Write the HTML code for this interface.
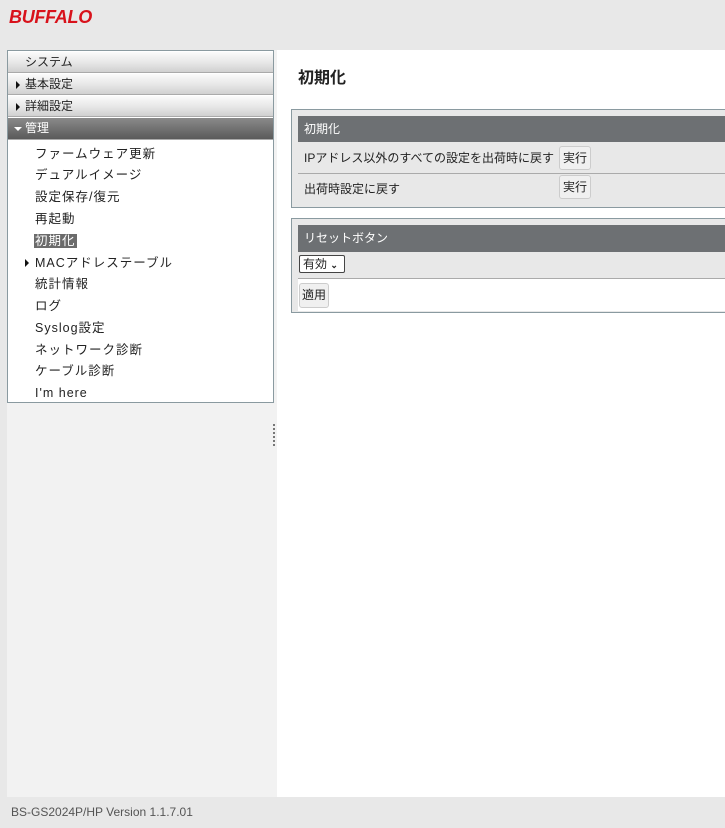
<!DOCTYPE html>
<html><head><meta charset="utf-8"><style>
*{margin:0;padding:0;box-sizing:border-box}
body{width:725px;height:828px;background:#e8e8e8;font-family:"Liberation Sans","Noto Sans CJK JP",sans-serif;font-size:12px;color:#222;position:relative;overflow:hidden}
.abs{position:absolute}
.logo{left:9px;top:7px;font:italic bold 18px "Liberation Sans",sans-serif;color:#d8121b;letter-spacing:-0.3px}
.side{left:7px;top:50px;width:270px;height:747px;background:#f2f2f2}
.nav{left:7px;top:50px;width:267px;height:353px;background:#fff;border:1px solid #8a9aa0}
.cat{position:absolute;left:0;width:265px;height:21px;background:linear-gradient(#fbfbfb,#e6e6e6 55%,#d0d0d0);border-bottom:1px solid #aaa;font-size:12px;line-height:21px;padding-left:17px;color:#222}
.cat.act{background:linear-gradient(#8a8a8a,#5a5a5a);color:#fff}
.tri{position:absolute;left:8px;top:7px;width:0;height:0;border-top:4px solid transparent;border-bottom:4px solid transparent;border-left:4px solid #111}
.tri.dn{left:6px;top:9px;border-left:4px solid transparent;border-right:4px solid transparent;border-top:4px solid #fff;border-bottom:0}
.it{position:absolute;left:27px;font-size:12.5px;letter-spacing:1px;line-height:18px}
.sel{background:#6b6b6b;color:#fff;padding:0 1px;margin-left:-1px}
.main{left:277px;top:50px;width:448px;height:747px;background:#fff}
h1{position:absolute;left:298px;top:64px;font-size:16px;font-weight:bold}
.box{position:absolute;left:291px;width:440px;border:1px solid #8a9aa0;background:#e8e8e8}
.hd{position:absolute;left:6px;right:0;background:#6d7073;color:#fff;font-size:12px;padding-left:6px}
.row{position:absolute;left:6px;right:0;font-size:12px;padding-left:6px;border-bottom:1px solid #aaa}
.btn{position:absolute;background:#f0f0f0;border:1px solid #ccc;border-radius:3px;font-size:12px;text-align:center;color:#222}
.foot{left:0;top:797px;width:725px;height:31px;background:#e8e8e8;color:#555;font-size:12px;line-height:31px;padding-left:11px}
</style></head><body>
<div class="abs logo">BUFFALO</div>
<div class="abs side"></div>
<div class="abs nav">
<div class="cat" style="top:1px;padding-left:17px">システム</div>
<div class="cat" style="top:23px"><span class="tri"></span>基本設定</div>
<div class="cat" style="top:45px"><span class="tri"></span>詳細設定</div>
<div class="cat act" style="top:67px;height:22px"><span class="tri dn"></span>管理</div>
<div class="it" style="top:94px">ファームウェア更新</div>
<div class="it" style="top:115px">デュアルイメージ</div>
<div class="it" style="top:137px">設定保存/復元</div>
<div class="it" style="top:159px">再起動</div>
<div class="it" style="top:181px"><span class="sel">初期化</span></div>
<div class="it" style="top:203px"><span class="tri" style="left:-10px;top:5px"></span>MACアドレステーブル</div>
<div class="it" style="top:224px">統計情報</div>
<div class="it" style="top:246px">ログ</div>
<div class="it" style="top:268px">Syslog設定</div>
<div class="it" style="top:290px">ネットワーク診断</div>
<div class="it" style="top:311px">ケーブル診断</div>
<div class="it" style="top:333px">I'm here</div>
</div>
<div class="abs" style="left:273px;top:424px;width:2px;height:22px;border-left:2px dotted #777"></div>
<div class="abs main"></div>
<h1>初期化</h1>
<div class="box" style="top:109px;height:99px">
<div class="hd" style="top:6px;height:26px;line-height:26px">初期化</div>
<div class="row" style="top:32px;height:32px;line-height:32px">IPアドレス以外のすべての設定を出荷時に戻す</div>
<div class="row" style="top:64px;height:30px;line-height:30px;border-bottom:0">出荷時設定に戻す</div>
<div class="btn" style="left:267px;top:36px;width:32px;height:24px;line-height:22px">実行</div>
<div class="btn" style="left:267px;top:65px;width:32px;height:24px;line-height:22px">実行</div>
</div>
<div class="box" style="top:218px;height:95px">
<div class="hd" style="top:6px;height:27px;line-height:27px">リセットボタン</div>
<div class="row" style="top:33px;height:27px;padding-left:0"><div style="position:absolute;left:1px;top:3px;width:46px;height:18px;border:1px solid #444;border-radius:2px;background:#fff;line-height:16px;padding-left:3px;font-size:12px">有効 <span style="font-size:9px;font-weight:bold">&#8964;</span></div></div>
<div style="position:absolute;left:6px;right:0;top:60px;height:32px;background:#fff"></div>
<div class="btn" style="left:7px;top:64px;width:30px;height:25px;line-height:23px">適用</div>
</div>
<div class="abs foot">BS-GS2024P/HP Version 1.1.7.01</div>
</body></html>
